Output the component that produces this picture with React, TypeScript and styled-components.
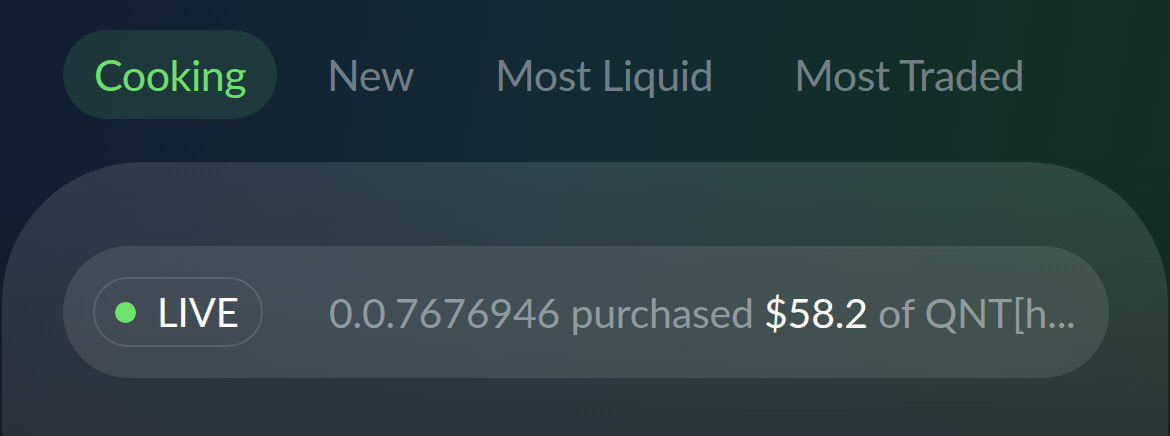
import React from "react";
import styled, { createGlobalStyle } from "styled-components";

const GlobalStyle = createGlobalStyle`
  html, body {
    margin: 0;
    padding: 0;
    height: 100%;
  }
  body {
    font-family: "Lato", "Noto Sans", sans-serif;
    background: #0f1a2b;
    overflow: hidden;
  }
`;

const Page = styled.div`
  width: 1170px;
  height: 436px;
  overflow: hidden;
  box-sizing: border-box;
  padding-top: 30px;
  background:
    linear-gradient(180deg, rgba(22, 26, 32, 0) 35%, rgba(22, 26, 32, 0.65) 100%),
    linear-gradient(100deg, #111c30 0%, #132a33 45%, #12311f 100%);
`;

const Tabs = styled.nav`
  display: flex;
  align-items: center;
  gap: 19px;
  padding-left: 63px;
`;

const Tab = styled.button<{ $active?: boolean }>`
  height: 89px;
  padding: 0 31px;
  border: none;
  border-radius: 45px;
  font-family: inherit;
  font-size: 43px;
  font-weight: 400;
  letter-spacing: -0.5px;
  cursor: pointer;
  color: ${(p) => (p.$active ? "#6fe06c" : "rgba(155, 166, 175, 0.7)")};
  background: ${(p) => (p.$active ? "rgba(60, 120, 85, 0.28)" : "transparent")};
`;

const Card = styled.section`
  margin: 43px 2px 0;
  height: 320px;
  box-sizing: border-box;
  padding: 84px 59px 0 61px;
  border-radius: 140px 140px 0 0;
  background: linear-gradient(180deg, rgba(255, 255, 255, 0.12) 0%, rgba(255, 255, 255, 0.09) 100%);
`;

const Ticker = styled.div`
  display: flex;
  align-items: center;
  height: 132px;
  padding-left: 30px;
  border-radius: 66px;
  background: rgba(255, 255, 255, 0.1);
  overflow: hidden;
`;

const LiveBadge = styled.div`
  display: flex;
  align-items: center;
  gap: 21px;
  height: 70px;
  box-sizing: border-box;
  padding: 0 22px 0 20px;
  border: 2px solid rgba(255, 255, 255, 0.13);
  border-radius: 35px;
  color: #ffffff;
  font-size: 40px;
  flex-shrink: 0;
`;

const Dot = styled.span`
  width: 21px;
  height: 21px;
  border-radius: 50%;
  background: #6ee36b;
`;

const Message = styled.p`
  margin: 0 0 0 66px;
  font-size: 41px;
  letter-spacing: -0.2px;
  color: rgba(200, 205, 212, 0.6);
  white-space: nowrap;
`;

const Amount = styled.span`
  color: #ffffff;
`;

const tabs = ["Cooking", "New", "Most Liquid", "Most Traded"];

export default function App() {
  return (
    <Page>
      <GlobalStyle />
      <Tabs>
        {tabs.map((t, i) => (
          <Tab key={t} $active={i === 0}>
            {t}
          </Tab>
        ))}
      </Tabs>
      <Card>
        <Ticker>
          <LiveBadge>
            <Dot />
            LIVE
          </LiveBadge>
          <Message>
            0.0.7676946 purchased <Amount>$58.2</Amount> of QNT[h...
          </Message>
        </Ticker>
      </Card>
    </Page>
  );
}
